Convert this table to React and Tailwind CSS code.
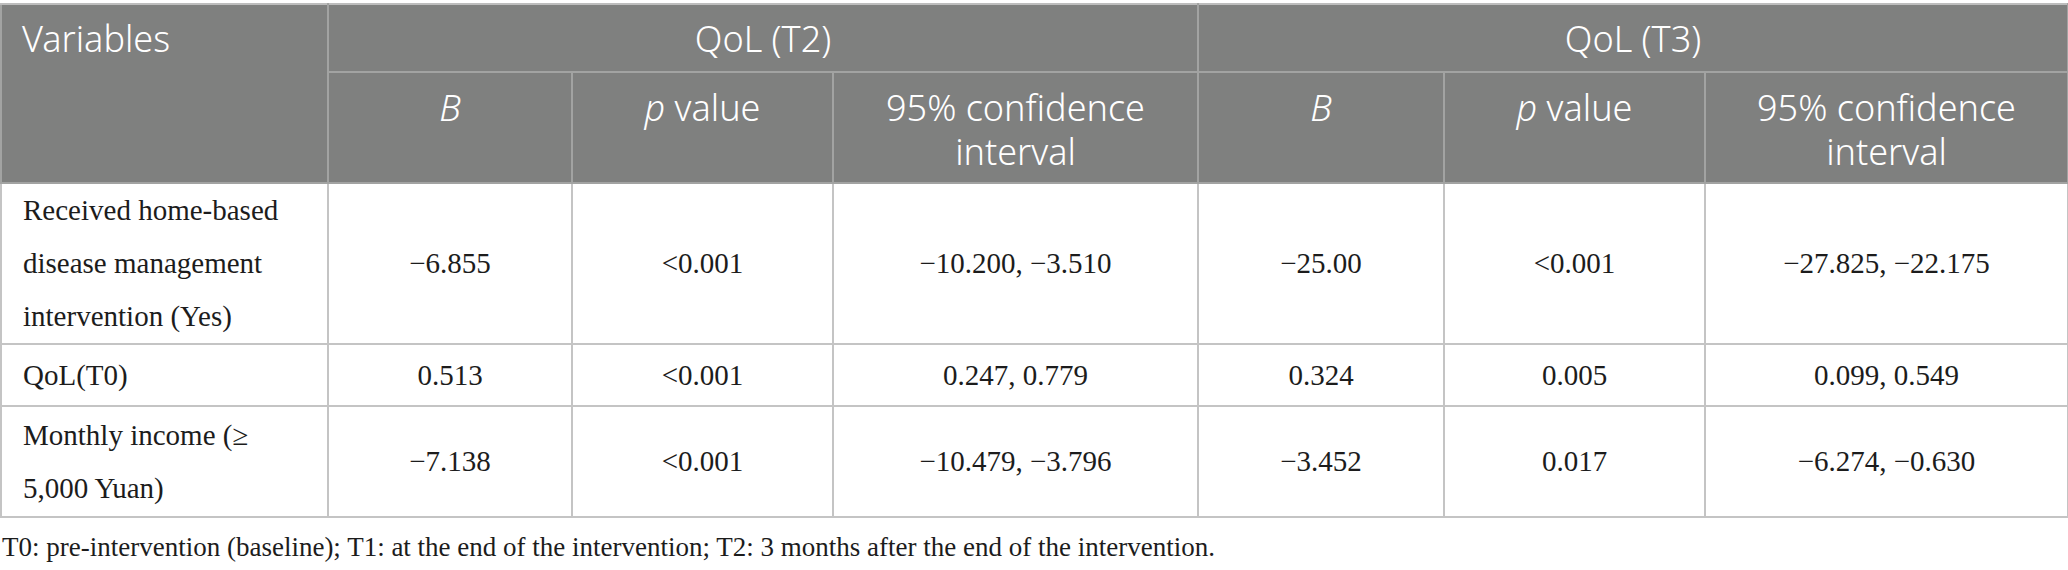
import React from "react";

const rows = [
  {
    label: "Received home-based disease management intervention (Yes)",
    h: "h-[161px]",
    vals: ["−6.855", "<0.001", "−10.200, −3.510", "−25.00", "<0.001", "−27.825, −22.175"],
  },
  {
    label: "QoL(T0)",
    h: "h-[62px]",
    vals: ["0.513", "<0.001", "0.247, 0.779", "0.324", "0.005", "0.099, 0.549"],
  },
  {
    label: "Monthly income (≥ 5,000 Yuan)",
    h: "h-[111px]",
    vals: ["−7.138", "<0.001", "−10.479, −3.796", "−3.452", "0.017", "−6.274, −0.630"],
  },
];

function SubHeads() {
  return (
    <>
      <th className="border-2 border-[#a2a3a2] px-2 pt-[13px] pb-2 align-top font-light">
        <i>B</i>
      </th>
      <th className="border-2 border-[#a2a3a2] px-2 pt-[13px] pb-2 align-top font-light">
        <i>p</i> value
      </th>
      <th className="border-2 border-[#a2a3a2] px-2 pt-[13px] pb-2 align-top font-light">
        95% confidence
        <br />
        interval
      </th>
    </>
  );
}

export default function App() {
  return (
    <div className="w-[2068px] h-[570px] bg-white pt-[3px]">
      <table className="table-fixed border-collapse w-[2067px]">
        <colgroup>
          <col className="w-[327px]" />
          <col className="w-[244px]" />
          <col className="w-[261px]" />
          <col className="w-[365px]" />
          <col className="w-[246px]" />
          <col className="w-[261px]" />
          <col className="w-[363px]" />
        </colgroup>
        <thead className="bg-[#7f807f] text-white font-['Noto_Sans',sans-serif] text-[36px] leading-[44px]">
          <tr className="h-[68px]">
            <th
              rowSpan={2}
              className="border-2 border-[#a2a3a2] border-t-[#bdbdbd] pl-5 pt-3 text-left align-top font-light"
            >
              Variables
            </th>
            <th colSpan={3} className="border-2 border-[#a2a3a2] border-t-[#bdbdbd] pt-3 align-top font-light">
              QoL (T2)
            </th>
            <th colSpan={3} className="border-2 border-[#a2a3a2] border-t-[#bdbdbd] pt-3 align-top font-light">
              QoL (T3)
            </th>
          </tr>
          <tr className="h-[111px]">
            <SubHeads />
            <SubHeads />
          </tr>
        </thead>
        <tbody className="font-['Liberation_Serif',serif] text-[29px] leading-[53px] text-[#1c1c1c]">
          {rows.map((r, k) => (
            <tr key={k} className={r.h}>
              <td className="border-2 border-[#c4c4c4] pl-[21px] pr-3 align-middle">{r.label}</td>
              {r.vals.map((v, i) => (
                <td key={i} className="border-2 border-[#c4c4c4] text-center align-middle">
                  {v}
                </td>
              ))}
            </tr>
          ))}
        </tbody>
      </table>
      <p className="font-['Liberation_Serif',serif] text-[27px] leading-[40px] text-[#1c1c1c] mt-[9px] pl-[2px]">
        T0: pre-intervention (baseline); T1: at the end of the intervention; T2: 3 months after the end of the
        intervention.
      </p>
    </div>
  );
}
